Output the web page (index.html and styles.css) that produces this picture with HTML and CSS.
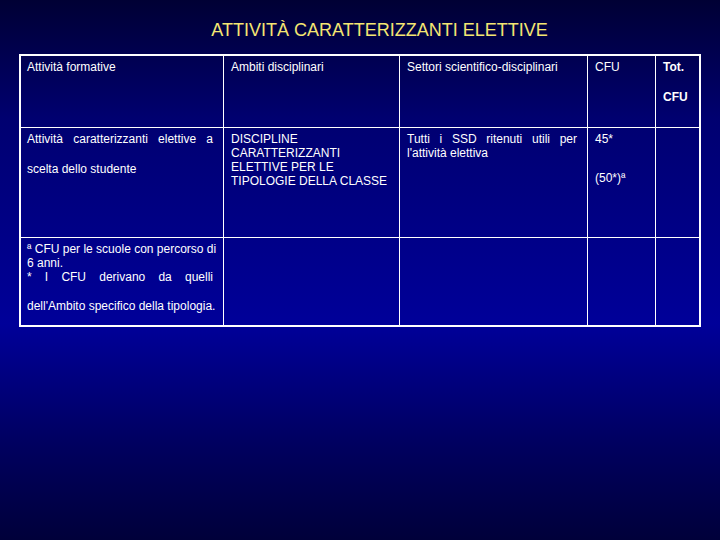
FILE: index.html
```html
<!DOCTYPE html>
<html lang="it">
<head>
<meta charset="utf-8">
<title>Attività caratterizzanti elettive</title>
<link rel="stylesheet" href="styles.css">
</head>
<body>
<div class="slide">
  <h1 class="title">ATTIVITÀ CARATTERIZZANTI ELETTIVE</h1>
  <div class="grid">
    <div class="cell c1">Attività formative</div>
    <div class="cell">Ambiti disciplinari</div>
    <div class="cell">Settori scientifico-disciplinari</div>
    <div class="cell">CFU</div>
    <div class="cell last-col bold">
      <div class="ln">Tot.</div>
      <div class="ln gap16">CFU</div>
    </div>

    <div class="cell c1">
      <div class="ln jl">Attività caratterizzanti elettive a</div>
      <div class="ln gap16">scelta dello studente</div>
    </div>
    <div class="cell caps">DISCIPLINE<br>CARATTERIZZANTI<br>ELETTIVE PER LE<br>TIPOLOGIE DELLA CLASSE</div>
    <div class="cell">
      <div class="ln jl">Tutti i SSD ritenuti utili per</div>
      <div class="ln">l'attività elettiva</div>
    </div>
    <div class="cell">
      <div class="ln">45*</div>
      <div class="ln gap25">(50*)ª</div>
    </div>
    <div class="cell last-col"></div>

    <div class="cell c1 last-row">
      <div class="ln small first">ª CFU per le scuole con percorso di</div>
      <div class="ln small second">6 anni.</div>
      <div class="ln jl gap2">* I CFU derivano da quelli</div>
      <div class="ln gap15">dell'Ambito specifico della tipologia.</div>
    </div>
    <div class="cell last-row"></div>
    <div class="cell last-row"></div>
    <div class="cell last-row"></div>
    <div class="cell last-row last-col"></div>
  </div>
</div>
</body>
</html>
```

FILE: styles.css
```css
html, body {
  margin: 0;
  padding: 0;
}

body {
  width: 720px;
  height: 540px;
  overflow: hidden;
  background: linear-gradient(to bottom, #000034 0%, #000070 22%, #000099 60%, #000060 82%, #00003a 100%);
  font-family: "Liberation Sans", Arial, sans-serif;
  color: #ffffff;
}

.slide {
  width: 720px;
  height: 540px;
}

.title {
  margin: 0;
  padding: 20px 0 0 39px;
  height: 20px;
  line-height: 20px;
  font-size: 18px;
  font-weight: normal;
  text-align: center;
  color: #f4e672;
}

.grid {
  display: grid;
  grid-template-columns: 203px 176px 188px 68px 43px;
  grid-template-rows: 72px 110px 87px;
  box-sizing: border-box;
  width: 682px;
  margin: 14px 0 0 19px;
  border: 2px solid #ffffff;
}

.cell {
  box-sizing: border-box;
  border-right: 1px solid #ffffff;
  border-bottom: 1px solid #ffffff;
  padding: 3.5px 10px 0 7px;
  font-size: 12px;
  line-height: 14px;
  overflow: hidden;
}

.cell.c1 {
  padding-left: 6px;
}

.cell.last-col {
  border-right: none;
  padding-right: 4px;
}

.cell.last-row {
  border-bottom: none;
}

.bold {
  font-weight: bold;
}

.caps {
  line-height: 14.3px;
}

.ln {
  display: block;
  white-space: nowrap;
}

.jl {
  white-space: normal;
  text-align: justify;
  text-align-last: justify;
}

.small {
  line-height: 12px;
}

.first {
  margin-top: 1.5px;
}

.second {
  margin-top: 1.5px;
}

.gap16 {
  margin-top: 16px;
}

.gap25 {
  margin-top: 25px;
}

.gap2 {
  margin-top: 1px;
}

.gap15 {
  margin-top: 15.5px;
}
```
